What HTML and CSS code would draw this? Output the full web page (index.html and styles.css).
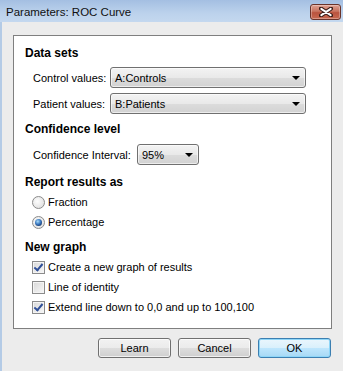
FILE: index.html
```html
<!DOCTYPE html>
<html lang="en">
<head>
  <meta charset="UTF-8"/>
  <title>Parameters: ROC Curve</title>
  <link rel="stylesheet" href="styles.css">
</head>
<body>
  <div class="window">
    <div class="titlebar">
      <span class="title">Parameters: ROC Curve</span>
      <span class="close">
        <svg width="14" height="10" viewBox="0 0 14 10">
          <path d="M2 1.5 L12 8.5 M12 1.5 L2 8.5" stroke="#3a1d18" stroke-width="4" stroke-linecap="round"/>
          <path d="M2.3 1.8 L11.7 8.2 M11.7 1.8 L2.3 8.2" stroke="#fff" stroke-width="2" stroke-linecap="round"/>
        </svg>
      </span>
    </div>
    <div class="body">
      <div class="panel">
        <div class="group">
          <h2 class="heading">Data sets</h2>
          <div class="fields">
            <div class="field">
              <label class="label">Control values:</label>
              <div class="combo combo-wide">A:Controls<span class="arrow"></span></div>
            </div>
            <div class="field">
              <label class="label">Patient values:</label>
              <div class="combo combo-wide">B:Patients<span class="arrow"></span></div>
            </div>
          </div>
        </div>
        <div class="group">
          <h2 class="heading">Confidence level</h2>
          <div class="fields">
            <div class="field">
              <label class="label label-long">Confidence Interval:</label>
              <div class="combo combo-small">95%<span class="arrow"></span></div>
            </div>
          </div>
        </div>
        <div class="group group-report">
          <h2 class="heading">Report results as</h2>
          <div class="choices">
            <div class="choice"><span class="radio"></span>Fraction</div>
            <div class="choice"><span class="radio checked"></span>Percentage</div>
          </div>
        </div>
        <div class="group">
          <h2 class="heading">New graph</h2>
          <div class="choices">
            <div class="choice"><span class="check checked"></span>Create a new graph of results</div>
            <div class="choice"><span class="check"></span>Line of identity</div>
            <div class="choice"><span class="check checked"></span>Extend line down to 0,0 and up to 100,100</div>
          </div>
        </div>
      </div>
      <div class="buttons">
        <button class="btn">Learn</button>
        <button class="btn">Cancel</button>
        <button class="btn btn-default">OK</button>
      </div>
    </div>
  </div>
</body>
</html>
```

FILE: styles.css
```css
body { margin: 0; font-family: "Liberation Sans", Arial, sans-serif; font-size: 11px; color: #000; background: #ececec; }
.window { width: 343px; height: 371px; display: flex; flex-direction: column; background: #ececec; border-left: 2px solid #b4cbe6; box-sizing: border-box; }
.titlebar { height: 22px; flex-shrink: 0; display: flex; align-items: center; justify-content: space-between; margin-left: -2px; padding-left: 6px; background: linear-gradient(to bottom, #a4bfe2, #bcd2ec 60%, #c4d8ef); }
.title { font-size: 11.5px; color: #111; margin-top: 1px; }
.close { width: 31px; height: 16px; margin-right: 2px; margin-top: 1px; box-sizing: border-box; border: 1px solid #6a332a; border-radius: 3px; display: flex; align-items: center; justify-content: center; background: linear-gradient(to bottom, #dfa293, #c8735f 45%, #b9533e 55%, #c86a52); box-shadow: inset 0 0 0 1px rgba(255,255,255,0.3); }
.body { flex: 1; display: flex; flex-direction: column; }
.panel { margin: 13px 0 0 11px; width: 319px; height: 294px; box-sizing: border-box; background: #fff; border: 1px solid #7f7f7f; padding: 9px 0 0 11px; display: flex; flex-direction: column; gap: 7px; }
.group-report { margin-top: 2px; }
.heading { margin: 0; font-size: 12px; line-height: 16px; font-weight: bold; }
.fields { display: flex; flex-direction: column; gap: 5px; margin-top: 6px; padding-left: 8px; }
.group:nth-child(2) .fields { margin-top: 7px; }
.field { display: flex; align-items: center; height: 21px; }
.label { width: 77px; }
.label-long { width: 104px; }
.combo { height: 21px; box-sizing: border-box; border: 1px solid #707070; border-radius: 3px; padding-left: 4px; display: flex; align-items: center; justify-content: space-between; background: linear-gradient(to bottom, #f3f3f3, #e9e9e9 50%, #dcdcdc 51%, #d2d2d2); box-shadow: inset 0 0 0 1px rgba(255,255,255,0.6); }
.combo-wide { width: 196px; }
.combo-small { width: 62px; }
.arrow { width: 0; height: 0; margin-right: 5px; border-left: 4px solid transparent; border-right: 4px solid transparent; border-top: 4px solid #000; }
.choices { display: flex; flex-direction: column; margin-top: 2px; padding-left: 7px; }
.choice { height: 20px; display: flex; align-items: center; }
.radio { width: 13px; height: 13px; box-sizing: border-box; border-radius: 50%; border: 1px solid #8b8b8b; margin-right: 3px; background: radial-gradient(circle at 40% 40%, #fdfdfd, #e4e4e4 70%, #d8d8d8); display: flex; align-items: center; justify-content: center; }
.radio.checked::after { content: ""; width: 7px; height: 7px; border-radius: 50%; background: radial-gradient(circle at 40% 35%, #a8dcfa, #3a78c0 45%, #14356a 80%); }
.check { width: 13px; height: 13px; box-sizing: border-box; border: 1px solid #8b8b8b; margin-right: 3px; background: linear-gradient(135deg, #d8d8d8, #f7f7f7); box-shadow: inset 0 0 0 1px #f4f4f4; position: relative; }
.check.checked::after { content: ""; position: absolute; left: 3px; top: 0px; width: 3px; height: 7px; border: solid #2f4f98; border-width: 0 2px 2px 0; transform: rotate(40deg); }
.buttons { display: flex; justify-content: flex-end; gap: 7px; margin-top: 9px; padding-right: 12px; }
.btn { width: 73px; height: 20px; font-family: inherit; font-size: 11px; color: #000; padding: 0; border: 1px solid #707070; border-radius: 3px; background: linear-gradient(to bottom, #f2f2f2, #ebebeb 50%, #dddddd 51%, #cfcfcf); box-shadow: inset 0 0 0 1px rgba(255,255,255,0.7); }
.btn-default { border-color: #3c7fb1; background: linear-gradient(to bottom, #eaf6fd, #d9f0fc 50%, #bee6fd 51%, #a7d9f5); box-shadow: inset 0 0 0 1px #8ed6f8; }
```
